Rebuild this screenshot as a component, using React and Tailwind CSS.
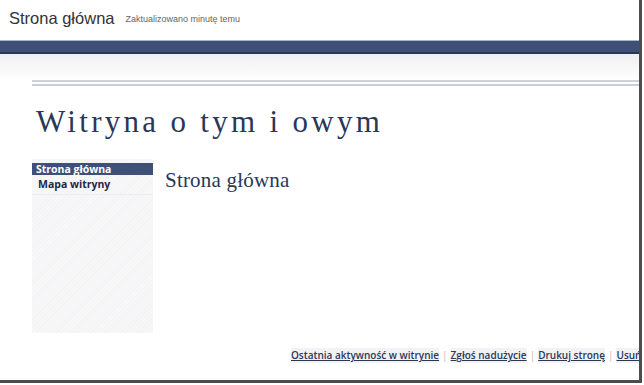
export default function App() {
  const footerLinks = ['Ostatnia aktywność w witrynie', 'Zgłoś nadużycie', 'Drukuj stronę', 'Usuń dostęp'];

  return (
    <div className="w-[644px] h-[385px] bg-white overflow-hidden">
      <div className="w-[642px] h-[383px] border-r-[3px] border-b-[3px] border-[#4d4d4d] bg-white flex flex-col overflow-hidden">
        {/* top header */}
        <div className="h-[40px] flex items-center pl-[9px] pb-[4px] gap-[11px]">
          <span className="text-[16.5px] text-[#333] font-['Liberation_Sans',sans-serif]">Strona główna</span>
          <span className="text-[9px] text-[#666] pt-[3px] font-['Liberation_Sans',sans-serif]">Zaktualizowano minutę temu</span>
        </div>

        {/* blue bar */}
        <div className="h-[14px] bg-[#3f5078] border-t border-[#aab3c8] border-b-2 border-b-[#2a3656]" />
        <div className="h-[26px] bg-[linear-gradient(to_bottom,#f0f0f2,#ffffff)]" />

        {/* double rule */}
        <div className="ml-[32px] flex flex-col gap-[2px]">
          <div className="h-[2px] bg-[#cfd1d8]" />
          <div className="h-[2px] bg-[#c9cedd]" />
        </div>

        {/* site title */}
        <h1 className="ml-[36px] mt-[18px] text-[31px] leading-[36px] tracking-[3.3px] text-[#2a3757] font-['Liberation_Serif',serif]">
          Witryna o tym i owym
        </h1>

        <div className="flex mt-[19px] ml-[32px]">
          {/* sidebar */}
          <div className="w-[121px] h-[174px] bg-[repeating-linear-gradient(135deg,#f7f7f8_0px,#f7f7f8_2px,#f3f3f5_2px,#f3f3f5_3px)] pt-[4px]">
            <div className="h-[12px] bg-[#3f5078] text-white text-[10.5px] leading-[12px] font-bold pl-[4px] font-['Open_Sans',sans-serif]">
              Strona główna
            </div>
            <div className="h-[20px] flex items-center pl-[6px] text-[10.5px] font-bold text-[#1e2846] border-b border-[#ededef] font-['Open_Sans',sans-serif]">
              Mapa witryny
            </div>
          </div>

          {/* main */}
          <div className="ml-[12px] pt-[8px]">
            <h2 className="text-[21px] leading-[26px] tracking-[0.2px] text-[#2a3757] font-['Liberation_Serif',serif]">Strona główna</h2>
          </div>
        </div>

        {/* footer */}
        <div className="mt-[15px] ml-[291px] flex items-center whitespace-nowrap text-[10px] font-['Open_Sans',sans-serif]">
          {footerLinks.map((l, i) => (
            <span key={l} className="flex items-center">
              {i > 0 && <span className="mx-[3px] text-[#bbb]">|</span>}
              <a className="bg-[#f2f2f4] underline text-[#2a3757] font-semibold">{l}</a>
            </span>
          ))}
        </div>
      </div>
    </div>
  );
}
